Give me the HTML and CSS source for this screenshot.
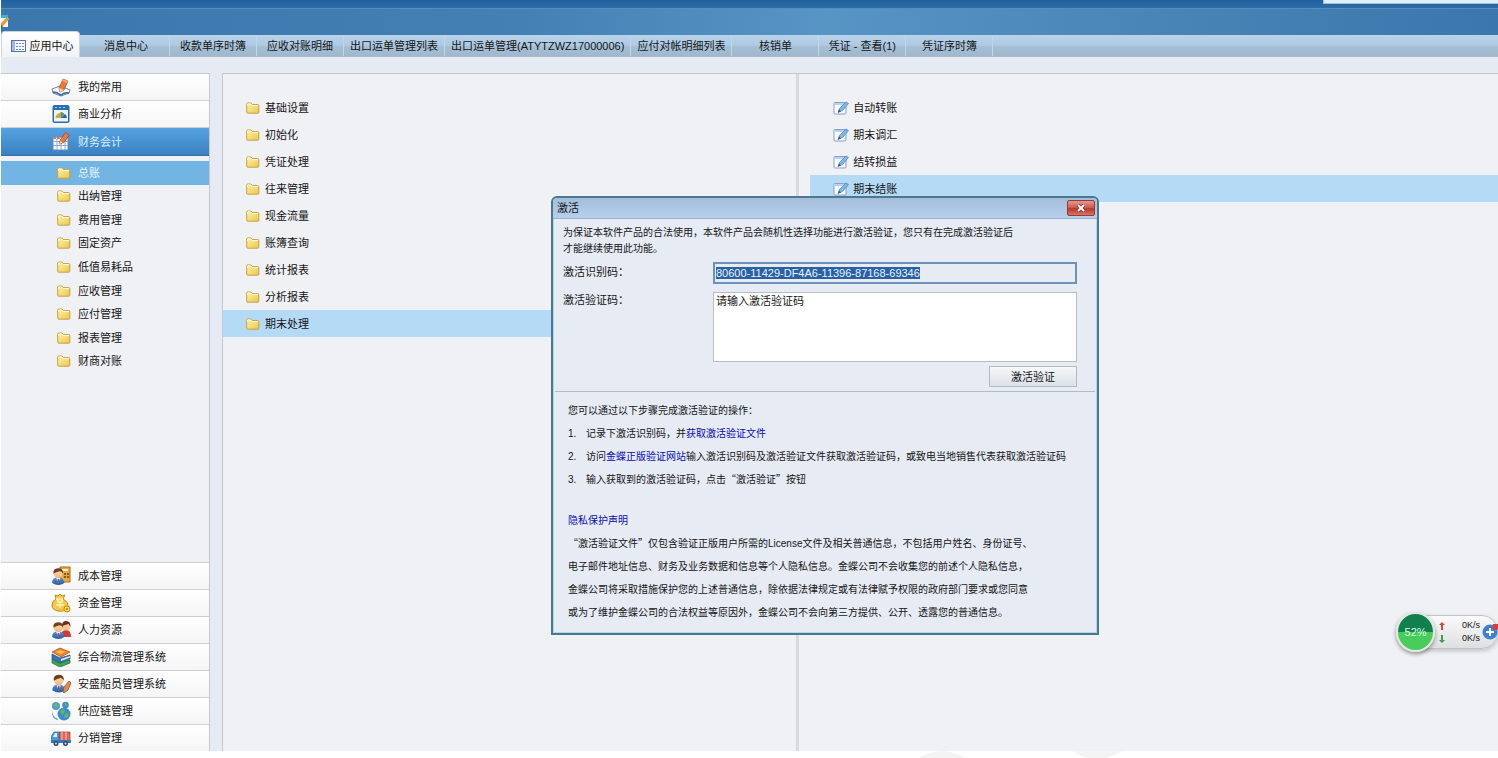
FILE: index.html
```html
<!DOCTYPE html>
<html lang="zh-CN">
<head>
<meta charset="utf-8">
<title>应用中心</title>
<link rel="stylesheet" href="styles.css">
</head>
<body>
<svg class="defs" aria-hidden="true">
  <defs>
    <linearGradient id="gold" x1="0" y1="0" x2="1" y2="1"><stop offset="0" stop-color="#fff3a8"/><stop offset="1" stop-color="#ecc64c"/></linearGradient>
    <linearGradient id="blue" x1="0" y1="0" x2="0" y2="1"><stop offset="0" stop-color="#4b9be0"/><stop offset="1" stop-color="#1a5ba8"/></linearGradient>
    <linearGradient id="skin" x1="0" y1="0" x2="0" y2="1"><stop offset="0" stop-color="#ffe0b8"/><stop offset="1" stop-color="#f3b47c"/></linearGradient>
    <symbol id="folder" viewBox="0 0 14 12"><path d="M.7 10.2V2Q.7 1 1.7 1H5l1.400 1.600h5.400q1 0 1 1v6.600q0 1-1 1H1.700q-1 0-1-1z" fill="url(#gold)" stroke="#c4a144"/><path d="M1.600 4V2h3.200l1.300 1.600h5.900" fill="none" stroke="#fffbdc"/></symbol>
    <symbol id="edit" viewBox="0 0 16 14"><rect x="1" y="1.500" width="12" height="11.500" rx="1" fill="#fbfcff" stroke="#8b9ccb"/><path d="M1 2h12v2H1z" fill="#b8d3ee"/><path d="M5 11.500l1.500-4L13 1l2.500 1.500L9.500 9.500z" fill="#7dbbe6" stroke="#4a86be" stroke-width=".8"/><path d="M5 11.500l1-3 2 2z" fill="#42536b"/></symbol>
    <symbol id="person" viewBox="0 0 14 17"><path d="M1 14.500q0-5 5.500-5t6 5q-5.500 4-11.500 0z" fill="url(#blue)"/><path d="M5 10l1.700 5L8.500 10z" fill="#fff"/><path d="M6.300 10.500h1l.5 3-1 1.200-1-1.200z" fill="#c33"/><circle cx="6.800" cy="5.800" r="4.200" fill="url(#skin)"/><path d="M2.300 6Q1.500 1 6.500.7 11.800.6 11.300 6q-1-2.200-3-2.400Q4.500 4.500 2.300 6z" fill="#70401f"/></symbol>
  </defs>
</svg>

<header class="top">
  <div class="title-strip"><div class="top-tip"></div></div>
  <div class="banner">
    <svg class="banner-icon" viewBox="0 0 9 13"><path d="M0 1h7v11H0z" fill="#f5f8fb"/><path d="M0 0h7v3H0z" fill="#35b3dc"/><path d="M0 8l6-6 2.500 2L2 11 0 12z" fill="#e59a45"/><path d="M0 10l2 1-2 2z" fill="#5d4a38"/></svg>
  </div>
  <nav class="tabs">
    <button class="tab tab-active" type="button"><svg class="tab-icon" viewBox="0 0 16 12"><rect x=".5" y=".5" width="14" height="11" fill="#f4f7ff" stroke="#5871b4"/><path d="M1 1h3v10H1z" fill="#a4b8e5"/><path d="M5 3h2v1H5zm3 0h2v1H8zm3 0h2v1h-2zM5 6h2v1H5zm3 0h2v1H8zm3 0h2v1h-2zM5 9h2v1H5zm3 0h2v1H8zm3 0h2v1h-2z" fill="#7188c4"/></svg>应用中心</button>
    <button class="tab" type="button">消息中心</button>
    <button class="tab" type="button">收款单序时簿</button>
    <button class="tab" type="button">应收对账明细</button>
    <button class="tab" type="button">出口运单管理列表</button>
    <button class="tab" type="button">出口运单管理(ATYTZWZ17000006)</button>
    <button class="tab" type="button">应付对帐明细列表</button>
    <button class="tab" type="button">核销单</button>
    <button class="tab" type="button">凭证 - 查看(1)</button>
    <button class="tab" type="button">凭证序时簿</button>
  </nav>
</header>

<main class="workspace">
  <aside class="sidebar">
    <div class="modules">
      <button class="module" type="button"><svg class="module-icon" viewBox="0 0 20 20"><path d="M1 12l8-3 10 4-1 3-8 3-8-3z" fill="#f8fbff" stroke="#6784b5"/><path d="M2 15q4 0 8 3 4-3 8-2" fill="none" stroke="#3e5f99" stroke-width="1.500"/><path d="M8 11l4-9 5 2-4 9-4 2z" fill="#e5793d" stroke="#a74d22" stroke-width=".7"/><path d="M8 11l5 2-4 2z" fill="#f6d9a0"/><path d="M12 2l5 2-1 2-5-2z" fill="#f3a57a"/></svg>我的常用</button>
      <button class="module" type="button"><svg class="module-icon" viewBox="0 0 20 20"><rect x="1.500" y="1" width="17" height="18" rx="2" fill="#2b6db0"/><path d="M4 3h2v1H4zm4 0h2v1H8zm4 0h2v1h-2z" fill="#a6d2f4"/><path d="M3 6h14v11.500H3z" fill="#eaf4fc"/><path d="M4.500 14a5 5 0 0 1 5-5v5z" fill="#e5a32c"/><path d="M9.500 8a6 6 0 0 1 4 2l-4 4z" fill="#4e9b48"/><path d="M14 10a6 6 0 0 1 2 4H9.500z" fill="#3460b4"/></svg>商业分析</button>
      <button class="module module-active" type="button"><svg class="module-icon" viewBox="0 0 20 20"><path d="M2 5h15v13H2z" fill="#fff" stroke="#6387b5"/><path d="M2 5h3v2H2zm4 0h3v2H6z" fill="#dd7c55"/><path d="M2 9.500h15M2 13.500h15M6 7v11M10 7v11M14 7v11" stroke="#8aa9d2"/><path d="M8 12l1.500-4.500 5-7L18.500 3l-5.500 7.500z" fill="#e87945" stroke="#934524" stroke-width=".7"/><path d="M8 12l1.300-3 2.200 1.700z" fill="#fbe0b4"/></svg>财务会计</button>
    </div>
    <div class="submodules">
      <button class="sub sub-active" type="button"><svg class="folder"><use href="#folder"/></svg>总账</button>
      <button class="sub" type="button"><svg class="folder"><use href="#folder"/></svg>出纳管理</button>
      <button class="sub" type="button"><svg class="folder"><use href="#folder"/></svg>费用管理</button>
      <button class="sub" type="button"><svg class="folder"><use href="#folder"/></svg>固定资产</button>
      <button class="sub" type="button"><svg class="folder"><use href="#folder"/></svg>低值易耗品</button>
      <button class="sub" type="button"><svg class="folder"><use href="#folder"/></svg>应收管理</button>
      <button class="sub" type="button"><svg class="folder"><use href="#folder"/></svg>应付管理</button>
      <button class="sub" type="button"><svg class="folder"><use href="#folder"/></svg>报表管理</button>
      <button class="sub" type="button"><svg class="folder"><use href="#folder"/></svg>财商对账</button>
    </div>
    <div class="modules modules-bottom">
      <button class="module" type="button"><svg class="module-icon" viewBox="0 0 20 20"><path d="M9 1h10v15H9z" fill="#e9a83e" stroke="#a66d1e"/><path d="M11 3h6v2h-6z" fill="#fff2c0"/><path d="M13 7h2v2h-2zm3 0h2v2h-2zm-3 3h2v2h-2zm3 0h2v2h-2z" fill="#8d5b20"/><use href="#person" x="0" y="1" width="15" height="19"/></svg>成本管理</button>
      <button class="module" type="button"><svg class="module-icon" viewBox="0 0 20 20"><path d="M4 2l3 1 2-2 2 2 3-1-2 4q6 3 5 9-3 4-10 3-6-1-6-6 0-4 4-6z" fill="#f5c84a" stroke="#c18c1c"/><path d="M5 6h7M6 9h6M5 12h8M9 9v6M6 7l3 2 3-2" stroke="#fff4b5" fill="none" stroke-width="1.300"/><circle cx="16" cy="16" r="3" fill="#ffdc5a" stroke="#bf8712"/><path d="M15 15h2v2h-2z" fill="#c18c1c"/></svg>资金管理</button>
      <button class="module" type="button"><svg class="module-icon" viewBox="0 0 20 20"><path d="M10 17q0-7 5-7t5 7z" fill="#d33a32"/><circle cx="15" cy="6.500" r="4" fill="url(#skin)"/><path d="M11 6q0-5 4-5 5 0 4.500 6l-2-3z" fill="#6e321c"/><use href="#person" x="0" y="1" width="15" height="19"/></svg>人力资源</button>
      <button class="module" type="button"><svg class="module-icon" viewBox="0 0 20 20"><path d="M1 12l8 4 10-3v3l-10 4-8-4z" fill="#3da547" stroke="#20702b" stroke-width=".7"/><path d="M1 7l8 4 10-3v4L9 16l-8-4z" fill="#3873b8" stroke="#214a83" stroke-width=".7"/><path d="M10 12l9-3v1.500L10 14z" fill="#eee9d4"/><path d="M1 5l8-4 10 4-9 5z" fill="#ee842a" stroke="#a55116" stroke-width=".7"/><path d="M5 5l4-2 5 2-4 2z" fill="#ffbe62"/></svg>综合物流管理系统</button>
      <button class="module" type="button"><svg class="module-icon" viewBox="0 0 20 20"><use href="#person" x="0" y="0" width="16" height="19"/><path d="M12 18l1-5 5-6 2 2-3 7-4 3z" fill="#dd8a58" stroke="#985026" stroke-width=".8"/></svg>安盛船员管理系统</button>
      <button class="module" type="button"><svg class="module-icon" viewBox="0 0 20 20"><circle cx="5" cy="5" r="4" fill="#4e9bd5"/><path d="M3 3l3-1 1 3-2 2z" fill="#6dbb52"/><circle cx="14.500" cy="4" r="3.300" fill="#3b89c9"/><path d="M13 2l3 1-1 3z" fill="#6dbb52"/><circle cx="13" cy="13" r="6.500" fill="#3b8dd1"/><path d="M9 10l4-2 1 3-3 3zm6 2l3 1-2 4-3-1z" fill="#65b657"/><path d="M1 9q0 7 6 9l-1 1q-5-2-5-7z" fill="#5d92c4"/></svg>供应链管理</button>
      <button class="module" type="button"><svg class="module-icon" viewBox="0 0 20 20"><path d="M8 4h11v9H8z" fill="#df6759" stroke="#a83730" stroke-width=".7"/><path d="M11 4v9M15 4v9" stroke="#ffc1b2"/><path d="M0 14V9l3-5h5v10z" fill="#4b9de0" stroke="#215e9d" stroke-width=".7"/><path d="M2 9l2-4h2v4z" fill="#d8f1ff"/><path d="M0 12h20v3H0z" fill="#347bbd"/><circle cx="5" cy="15.500" r="2.500" fill="#334a68"/><circle cx="14.500" cy="15.500" r="2.500" fill="#334a68"/><circle cx="5" cy="15.500" r="1" fill="#dce6f0"/><circle cx="14.500" cy="15.500" r="1" fill="#dce6f0"/></svg>分销管理</button>
    </div>
  </aside>

  <section class="panes">
    <div class="pane pane-left">
      <button class="entry" type="button"><svg class="folder"><use href="#folder"/></svg>基础设置</button>
      <button class="entry" type="button"><svg class="folder"><use href="#folder"/></svg>初始化</button>
      <button class="entry" type="button"><svg class="folder"><use href="#folder"/></svg>凭证处理</button>
      <button class="entry" type="button"><svg class="folder"><use href="#folder"/></svg>往来管理</button>
      <button class="entry" type="button"><svg class="folder"><use href="#folder"/></svg>现金流量</button>
      <button class="entry" type="button"><svg class="folder"><use href="#folder"/></svg>账簿查询</button>
      <button class="entry" type="button"><svg class="folder"><use href="#folder"/></svg>统计报表</button>
      <button class="entry" type="button"><svg class="folder"><use href="#folder"/></svg>分析报表</button>
      <button class="entry entry-active" type="button"><svg class="folder"><use href="#folder"/></svg>期末处理</button>
    </div>
    <div class="pane pane-right">
      <button class="entry" type="button"><svg class="edit"><use href="#edit"/></svg>自动转账</button>
      <button class="entry" type="button"><svg class="edit"><use href="#edit"/></svg>期末调汇</button>
      <button class="entry" type="button"><svg class="edit"><use href="#edit"/></svg>结转损益</button>
      <button class="entry entry-active" type="button"><svg class="edit"><use href="#edit"/></svg>期末结账</button>
    </div>
  </section>
</main>
<footer class="bottom-strip"><svg class="bottom-shapes" viewBox="0 0 210 7"><path d="M0 7Q23-7 46 7z" fill="#f4f4f4"/><path d="M153 0h50q-25 16-50 0z" fill="#f4f4f4"/></svg></footer>

<section class="dialog" role="dialog" aria-labelledby="dialog-title">
  <header class="dialog-bar">
    <h1 class="dialog-title" id="dialog-title">激活</h1>
    <button class="close" type="button" aria-label="关闭"><svg class="close-icon" viewBox="0 0 10 8"><path d="M2 1l6 6M8 1L2 7" stroke="#6e3a38" stroke-width="3.600"/><path d="M2 1l6 6M8 1L2 7" stroke="#fff" stroke-width="2"/></svg></button>
  </header>
  <form class="form">
    <p class="intro">为保证本软件产品的合法使用，本软件产品会随机性选择功能进行激活验证，您只有在完成激活验证后<br>才能继续使用此功能。</p>
    <div class="field">
      <label class="label" for="ident">激活识别码：</label>
      <input class="ident" id="ident" type="text" value="80600-11429-DF4A6-11396-87168-69346" readonly>
    </div>
    <div class="field">
      <label class="label" for="code">激活验证码：</label>
      <textarea class="code" id="code">请输入激活验证码</textarea>
    </div>
    <button class="verify" type="button">激活验证</button>
  </form>
  <div class="notes">
    <p>您可以通过以下步骤完成激活验证的操作：</p>
    <ol class="steps">
      <li>记录下激活识别码，并<a href="#file">获取激活验证文件</a></li>
      <li>访问<a href="#site">金蝶正版验证网站</a>输入激活识别码及激活验证文件获取激活验证码，或致电当地销售代表获取激活验证码</li>
      <li>输入获取到的激活验证码，点击<span class="quote">“</span>激活验证<span class="quote">”</span>按钮</li>
    </ol>
    <p class="privacy"><a href="#privacy">隐私保护声明</a></p>
    <p><span class="quote">“</span>激活验证文件<span class="quote">”</span>仅包含验证正版用户所需的License文件及相关普通信息，不包括用户姓名、身份证号、<br>电子邮件地址信息、财务及业务数据和信息等个人隐私信息。金蝶公司不会收集您的前述个人隐私信息，<br>金蝶公司将采取措施保护您的上述普通信息，除依据法律规定或有法律赋予权限的政府部门要求或您同意<br>或为了维护金蝶公司的合法权益等原因外，金蝶公司不会向第三方提供、公开、透露您的普通信息。</p>
  </div>
</section>

<aside class="meter">
  <div class="meter-ball">52%</div>
  <div class="rates">
    <div class="rate"><svg class="arrow" viewBox="0 0 6 8"><path d="M3 0l3 3H4v5H2V3H0z" fill="#d4453c"/></svg>0K/s</div>
    <div class="rate"><svg class="arrow" viewBox="0 0 6 8"><path d="M3 8l3-3H4V0H2v5H0z" fill="#3c9c55"/></svg>0K/s</div>
  </div>
  <svg class="plus" viewBox="0 0 16 16"><circle cx="8" cy="8" r="7.500" fill="#3f80d4"/><path d="M8 4v8M4 8h8" stroke="#fff" stroke-width="2"/><circle cx="14" cy="2.500" r="3.500" fill="#dc3c38"/></svg>
</aside>
<script src="main.js"></script>
</body>
</html>
```
FILE: main.js
```js
const ident = document.getElementById("ident");
ident.focus();
ident.select();
```
FILE: styles.css
```css
* { box-sizing: border-box; }
body {
  margin: 0;
  height: 100vh;
  display: flex;
  flex-direction: column;
  position: relative;
  overflow: hidden;
  padding-left: 1px;
  background: #fff;
  color: #151515;
  font: 11px/16px "Liberation Sans", "Noto Sans CJK SC", sans-serif;
}
button, input, textarea { font: inherit; color: inherit; margin: 0; border-radius: 0; }
button { border: 0; background: none; padding: 0; white-space: nowrap; }
p, h1, ol { margin: 0; padding: 0; font-size: inherit; font-weight: normal; }
a { color: #0b0bb0; text-decoration: none; }
svg { display: block; flex: none; }
.defs { position: absolute; width: 0; height: 0; }

.title-strip { height: 8px; background: linear-gradient(#1e60a0, #306ca4); display: flex; justify-content: flex-end; }
.top-tip { width: 175px; height: 4px; background: #dff1fa; border: solid #9cc3d8; border-width: 0 0 1px 1px; }
.banner { height: 27px; border-top: 1px solid #5090c0; background: linear-gradient(90deg, #3b76ad, #4580b4 35%, #5795c5 55%, #4783b5 80%, #3b76ad); padding-top: 6px; }
.banner-icon { width: 9px; height: 13px; }
.tabs { height: 22px; display: flex; align-items: flex-end; background: linear-gradient(#b8d3ea, #aecae2 50%, #a5bfd6 55%, #a0b8ce); border-bottom: 1px solid #a9b8c8; }
.tab { height: 20px; min-width: 87px; padding: 0 6px; border-right: 1px solid #c4d7e8; }
.tab-active {
  min-width: 79px; height: 26px; margin: 0 3px -1px 0;
  display: flex; align-items: center; justify-content: center; gap: 3px; flex: none;
  border: 1px solid #c9d4de; border-bottom: 0; border-radius: 4px 4px 0 0;
  background: linear-gradient(#fff, #f0f2f5); padding: 2px 5px 0 8px;
}
.tab-icon { width: 16px; height: 12px; }

.workspace { flex: 1; min-height: 0; display: flex; gap: 12px; padding-top: 16px; background: #e6ebf3; }
.sidebar { width: 209px; display: flex; flex-direction: column; background: #eff1f4; border: solid #c5c9cf; border-width: 1px 1px 0 0; }
.module {
  width: 100%; height: 27px; padding-left: 50px; display: flex; align-items: center; gap: 7px;
  background: linear-gradient(#fff, #f5f5f6); border-bottom: 1px solid #cdd0d4;
}
.module-icon { width: 20px; height: 20px; }
.module-active { color: #d9efff; background: linear-gradient(#57a3e2, #3a80c0); border-bottom-color: #2f6fae; height: 28px; }
.submodules { flex: none; height: 212px; margin-top: 5px; display: flex; flex-direction: column; }
.sub { flex: 1; padding-left: 56px; display: flex; align-items: center; gap: 7px; }
.sub-active { background: #72b4e2; color: #e8f7ff; }
.folder { width: 14px; height: 12px; }
.modules-bottom { margin-top: auto; border-top: 1px solid #cdd0d4; }
.modules-bottom .module:last-child { height: 26px; border-bottom: 0; }

.panes { flex: 1; display: grid; grid-template-columns: 452fr 548fr; background: #f0f1f4; border: solid #c5c9cf; border-width: 1px 0 0 1px; }
.pane { padding-top: 20px; }
.pane-left { border-right: 3px solid #d8dadd; }
.pane-right { padding-left: 11px; }
.entry { width: 100%; height: 27px; display: flex; align-items: center; gap: 5px; padding-left: 23px; }
.pane-right .entry { gap: 4px; }
.entry-active { background: #b4daf5; }
.edit { width: 16px; height: 14px; }
.bottom-strip { height: 7px; flex: none; background: #fff; }
.bottom-shapes { width: 210px; height: 7px; margin-left: 918px; }

.dialog {
  position: absolute; left: 551px; top: 196px; width: 548px;
  border: 2px solid #49788f; border-radius: 6px 6px 0 0; background: #e6ebf4;
  box-shadow: inset 0 0 0 1px #aedaf0; padding: 0 2px;
}
.dialog-bar {
  height: 21px; margin: 0 -2px; padding: 0 2px 0 4px; display: flex; align-items: center; justify-content: space-between;
  background: linear-gradient(#a3bdda, #b6cfec); border-bottom: 1px solid #98b0c8; border-radius: 4px 4px 0 0;
}
.close { width: 28px; height: 16px; border: 1px solid #8f3e3b; border-radius: 2px; background: linear-gradient(#e59a90, #d2534a 50%, #b8362c 55%, #dc7460); display: grid; place-items: center; }
.close-icon { width: 12px; height: 8px; }
.form { padding: 6px 18px 4px 8px; display: flex; flex-direction: column; border-bottom: 1px solid #b4bac4; }
.intro { font-size: 10px; margin-bottom: 5px; }
.field { display: flex; margin-bottom: 8px; }
.label { width: 150px; padding-top: 2px; }
.ident { flex: 1; min-width: 0; height: 22px; padding: 1px; border: 2px solid #6d91b9; background: #e6ebf4; outline: 0; }
.ident::selection { background: #2a61a3; color: #e8f2fa; }
.code { flex: 1; min-width: 0; height: 70px; padding: 0 2px; border: 1px solid #b8bdc6; background: #fff; resize: none; overflow: hidden; display: block; }
.field + .field { margin-bottom: 4px; }
.field + .field .label { padding-top: 0; }
.verify { align-self: flex-end; width: 88px; height: 21px; border: 1px solid #b3bac4; background: linear-gradient(#f5f7f9, #dce2e9); }
.notes { padding: 7px 0 9px 13px; font-size: 10px; line-height: 23px; white-space: nowrap; }
.steps { list-style: none; counter-reset: step; }
.steps li { counter-increment: step; }
.steps li::before { content: counter(step) "."; display: inline-block; width: 18px; }
.privacy { margin-top: 18px; }
.quote { font-family: "Noto Sans CJK SC", sans-serif; line-height: 16px; }

.meter {
  position: absolute; right: 0; top: 612px; width: 102px; height: 40px; display: flex; align-items: center;
}
.meter::before { content: ""; position: absolute; inset: 3px 0 3px 20px; background: linear-gradient(#fafafa, #dedfe1); border: 1px solid #c0c2c4; border-radius: 0 16px 16px 0; box-shadow: 0 2px 4px #0003; }
.meter > * { position: relative; }
.meter-ball { width: 40px; height: 40px; border-radius: 50%; border: 2px solid #dfe8e2; background: linear-gradient(#12804e 0 50%, #48cc5a 50%); color: #d8ffe2; text-align: center; line-height: 36px; box-shadow: 0 2px 4px #0006; }
.rates { width: 46px; padding-left: 4px; font-size: 9px; line-height: 13px; }
.rate { display: flex; align-items: center; justify-content: space-between; }
.arrow { width: 6px; height: 8px; }
.plus { width: 16px; height: 16px; margin-left: 2px; }
```
